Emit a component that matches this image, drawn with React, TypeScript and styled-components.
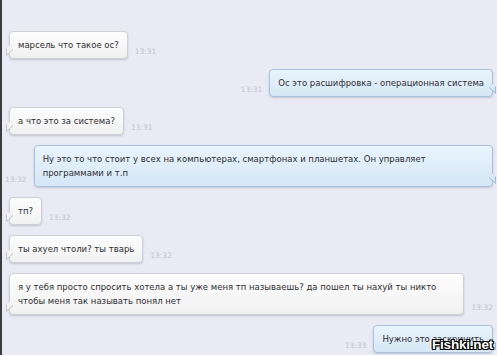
import React from 'react';
import styled, { createGlobalStyle, css } from 'styled-components';

type Side = 'in' | 'out';

type SideProps = {
    side: Side;
}

type BubbleProps = {
    side: Side;
    wide?: boolean;
}

const GlobalStyle = createGlobalStyle`
    html, body {
        margin: 0;
        padding: 0;
        overflow: hidden;
        background: #e9eaf4;
    }
    #root {
        height: 355px;
    }
`

const Screen = styled.div`
    position: relative;
    height: 355px;
    box-sizing: border-box;
    border-left: 2px solid #3b3b3e;
    background: #e9eaf4;
    font-family: "DejaVu Sans", "Liberation Sans", sans-serif;
    overflow: hidden;
`

const Thread = styled.div`
    display: flex;
    flex-direction: column;
    gap: 10px;
    padding: 31px 4px 0 3px;
`

const Row = styled.div<SideProps>`
    display: flex;
    align-items: flex-end;
    gap: 7px;
    justify-content: ${(props) => props.side === 'out' ? 'flex-end' : 'flex-start'};
    padding-left: ${(props) => props.side === 'in' ? '4px' : '0'};
`

const inStyle = css`
    background: linear-gradient(180deg, #fdfdfd 0%, #f1f1f2 100%);
    border: 1px solid #cfd0d4;

    &::before{
        left: -4px;
        border-left: 1px solid #c4c5ca;
        border-bottom: 1px solid #c4c5ca;
        background: #f2f2f3;
    }
`

const outStyle = css`
    background: linear-gradient(180deg, #e9f4fc 0%, #d5e7f6 100%);
    border: 1px solid #a9c3dc;

    &::before{
        right: -4px;
        border-right: 1px solid #a3bdd6;
        border-bottom: 1px solid #a3bdd6;
        background: #d7e8f6;
    }
`

const Bubble = styled.div<BubbleProps>`
    position: relative;
    box-sizing: border-box;
    padding: 6px 8px;
    border-radius: 4px;
    font-size: 8.5px;
    line-height: 14px;
    color: #2f2f33;
    box-shadow: 0 1px 2px rgba(90, 95, 120, 0.28);
    flex: ${(props) => props.wide ? '1' : '0 0 auto'};
    white-space: nowrap;

    &::before{
        content: '';
        position: absolute;
        bottom: 5px;
        width: 6px;
        height: 6px;
        transform: skewY(${(props) => props.side === 'in' ? '-40deg' : '40deg'});
    }

    ${(props) => props.side === 'in' ? inStyle : outStyle}
`

const Time = styled.span`
    flex: 0 0 auto;
    font-size: 7.5px;
    line-height: 9px;
    color: #c2c5cf;
    margin-bottom: 3px;
`

const Watermark = styled.div`
    position: absolute;
    right: 4px;
    bottom: 3px;
    font-family: "Liberation Sans", Arial, sans-serif;
    font-weight: bold;
    font-size: 13.5px;
    letter-spacing: -0.2px;
    color: #fff;
    text-shadow: -1px -1px 0 #000, 1px -1px 0 #000, -1px 1px 0 #000, 1px 1px 0 #000, 0 1px 0 #000, 0 -1px 0 #000, 1px 0 0 #000, -1px 0 0 #000;
`

type Message = {
    side: Side;
    time: string;
    lines: string[];
    wide?: boolean;
}

const messages: Message[] = [
    { side: 'in', time: '13:31', lines: ['марсель что такое ос?'] },
    { side: 'out', time: '13:31', lines: ['Ос это расшифровка - операционная система'] },
    { side: 'in', time: '13:31', lines: ['а что это за система?'] },
    {
        side: 'out', time: '13:32', wide: true,
        lines: ['Ну это то что стоит у всех на компьютерах, смартфонах и планшетах. Он управляет', 'программами и т.п'],
    },
    { side: 'in', time: '13:32', lines: ['тп?'] },
    { side: 'in', time: '13:32', lines: ['ты ахуел чтоли? ты тварь'] },
    {
        side: 'in', time: '13:32', wide: true,
        lines: ['я у тебя просто спросить хотела а ты уже меня тп называешь? да пошел ты нахуй ты никто', 'чтобы меня так называть понял нет'],
    },
    { side: 'out', time: '13:33', lines: ['Нужно это заскринить'] },
]

export default function App() {
    return (
        <>
            <GlobalStyle />
            <Screen>
                <Thread>
                    {messages.map((m, i) => (
                        <Row key={i} side={m.side}>
                            {m.side === 'out' && <Time>{m.time}</Time>}
                            <Bubble side={m.side} wide={m.wide}>
                                {m.lines.map((l, j) => (
                                    <React.Fragment key={j}>
                                        {j > 0 && <br />}
                                        {l}
                                    </React.Fragment>
                                ))}
                            </Bubble>
                            {m.side === 'in' && <Time>{m.time}</Time>}
                        </Row>
                    ))}
                </Thread>
                <Watermark>Fishki.net</Watermark>
            </Screen>
        </>
    );
}
